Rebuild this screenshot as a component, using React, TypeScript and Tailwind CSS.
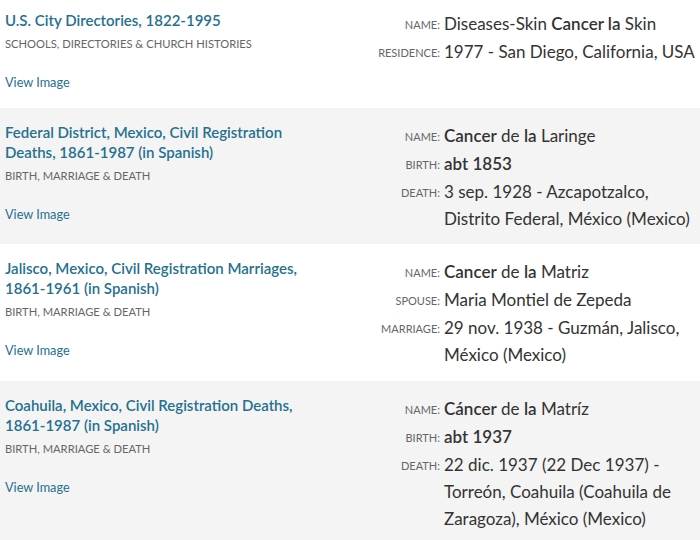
import React from "react";

type Field = { label: string; value: React.ReactNode };

const records: {
  title: string;
  category: string;
  fields: Field[];
  shaded: boolean;
  pad: string;
}[] = [
  {
    title: "U.S. City Directories, 1822-1995",
    category: "Schools, Directories & Church Histories",
    shaded: false,
    pad: "pt-[10px] pb-[16px]",
    fields: [
      {
        label: "Name",
        value: (
          <>
            Diseases-Skin <b className="font-semibold">Cancer la</b> Skin
          </>
        ),
      },
      { label: "Residence", value: "1977 - San Diego, California, USA" },
    ],
  },
  {
    title: "Federal District, Mexico, Civil Registration Deaths, 1861-1987 (in Spanish)",
    category: "Birth, Marriage & Death",
    shaded: true,
    pad: "pt-[14px] pb-[12px]",
    fields: [
      {
        label: "Name",
        value: (
          <>
            <b className="font-semibold">Cancer</b> de <b className="font-semibold">la</b> Laringe
          </>
        ),
      },
      { label: "Birth", value: <b className="font-semibold">abt 1853</b> },
      {
        label: "Death",
        value: "3 sep. 1928 - Azcapotzalco, Distrito Federal, México (Mexico)",
      },
    ],
  },
  {
    title: "Jalisco, Mexico, Civil Registration Marriages, 1861-1961 (in Spanish)",
    category: "Birth, Marriage & Death",
    shaded: false,
    pad: "pt-[14px] pb-[13px]",
    fields: [
      {
        label: "Name",
        value: (
          <>
            <b className="font-semibold">Cancer</b> de <b className="font-semibold">la</b> Matriz
          </>
        ),
      },
      { label: "Spouse", value: "Maria Montiel de Zepeda" },
      { label: "Marriage", value: "29 nov. 1938 - Guzmán, Jalisco, México (Mexico)" },
    ],
  },
  {
    title: "Coahuila, Mexico, Civil Registration Deaths, 1861-1987 (in Spanish)",
    category: "Birth, Marriage & Death",
    shaded: true,
    pad: "pt-[14px] pb-[13px]",
    fields: [
      {
        label: "Name",
        value: (
          <>
            <b className="font-semibold">Cáncer</b> de <b className="font-semibold">la</b> Matríz
          </>
        ),
      },
      { label: "Birth", value: <b className="font-semibold">abt 1937</b> },
      {
        label: "Death",
        value: "22 dic. 1937 (22 Dec 1937) - Torreón, Coahuila (Coahuila de Zaragoza), México (Mexico)",
      },
    ],
  },
];

export default function App() {
  return (
    <div className="w-[700px] h-[540px] overflow-hidden bg-white font-['Lato',sans-serif]">
      {records.map((r, i) => (
        <div
          key={i}
          className={`flex ${r.pad} ${r.shaded ? "bg-[#f4f4f4]" : "bg-white"}`}
        >
          {/* left: collection info */}
          <div className="w-[320px] shrink-0 pl-[5px] pr-[5px]">
            <div className="text-[15px] leading-[20px] font-semibold text-[#24708f]">
              {r.title}
            </div>
            <div className="mt-[6px] text-[11.2px] leading-[16px] uppercase text-[#666]">
              {r.category}
            </div>
            <div className="mt-[20px] text-[12.7px] leading-[20px] text-[#24708f]">
              View Image
            </div>
          </div>

          {/* right: record fields */}
          <div className="flex-1">
            {r.fields.map((f) => (
              <div key={f.label} className="flex">
                <div className="w-[120px] shrink-0 text-right text-[11px] leading-[27px] uppercase text-[#666] pt-[1px]">
                  {f.label}:
                </div>
                <div className="ml-[4px] w-[254px] text-[17px] leading-[27px] text-[#333]">
                  {f.value}
                </div>
              </div>
            ))}
          </div>
        </div>
      ))}
    </div>
  );
}
